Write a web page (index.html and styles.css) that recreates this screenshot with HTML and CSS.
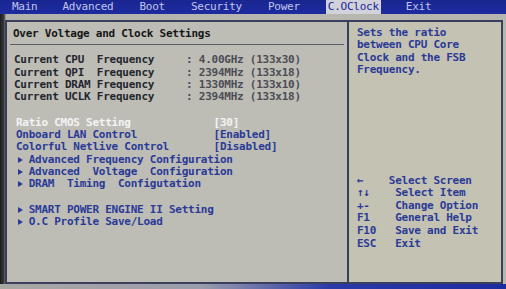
FILE: index.html
```html
<!DOCTYPE html>
<html>
<head>
<meta charset="utf-8">
<link rel="stylesheet" href="styles.css">
</head>
<body>
<div class="topbar"><span class="tab">Main</span><span class="tab t-adv">Advanced</span><span class="tab t-boot">Boot</span><span class="tab t-sec">Security</span><span class="tab t-pow">Power</span><span class="tab active">C.OClock</span><span class="tab t-exit">Exit</span></div>
<div class="frame">
  <div class="left">
    <div class="title">Over Voltage and Clock Settings</div>
    <div class="freqs">
      <div class="row"><span class="lbl">Current CPU  Frequency     </span><span class="val">: 4.00GHz (133x30)</span></div>
      <div class="row"><span class="lbl">Current QPI  Frequency     </span><span class="val">: 2394MHz (133x18)</span></div>
      <div class="row"><span class="lbl">Current DRAM Frequency     </span><span class="val">: 1330MHz (133x10)</span></div>
      <div class="row"><span class="lbl">Current UCLK Frequency     </span><span class="val">: 2394MHz (133x18)</span></div>
    </div>
    <div class="items">
      <div class="row sel">Ratio CMOS Setting             [30]</div>
      <div class="row">Onboard LAN Control            [Enabled]</div>
      <div class="row">Colorful Netlive Control       [Disabled]</div>
      <div class="row"><span class="tri"></span>  Advanced Frequency Configuration</div>
      <div class="row"><span class="tri"></span>  Advanced  Voltage  Configuration</div>
      <div class="row"><span class="tri"></span>  DRAM  Timing  Configutation</div>
    </div>
    <div class="items more">
      <div class="row"><span class="tri"></span>  SMART POWER ENGINE II Setting</div>
      <div class="row"><span class="tri"></span>  O.C Profile Save/Load</div>
    </div>
  </div>
  <div class="right">
    <div class="help">Sets the ratio<br>between CPU Core<br>Clock and the FSB<br>Frequency.</div>
    <div class="keys">
      <div class="row">←    Select Screen</div>
      <div class="row">↑↓    Select Item</div>
      <div class="row">+-    Change Option</div>
      <div class="row">F1    General Help</div>
      <div class="row">F10   Save and Exit</div>
      <div class="row">ESC   Exit</div>
    </div>
  </div>
</div>
<div class="bottombar"></div>
</body>
</html>
```
FILE: styles.css
```css
html, body {
  margin: 0;
  padding: 0;
}
body {
  width: 506px;
  height: 289px;
  overflow: hidden;
  background: linear-gradient(to right, #1c1c1e 0px, #3a3a3c 4px, #b2b2ac 6px, #b8b8b1 60%, #b6b6ae 100%);
  font-family: "DejaVu Sans Mono", "Liberation Mono", monospace;
  font-weight: bold;
  font-size: 11px;
  letter-spacing: -0.25px;
  position: relative;
}
.topbar {
  height: 14px;
  background: linear-gradient(to bottom, #1a2690, #1d2ba0);
  display: flex;
  white-space: pre;
  line-height: 14px;
  padding-left: 12px;
  box-sizing: border-box;
}
.tab {
  color: #c2c6ea;
  font-weight: normal;
}
.t-adv { margin-left: 25px; }
.t-boot { margin-left: 26px; }
.t-sec { margin-left: 26px; }
.t-pow { margin-left: 26px; }
.active {
  margin-left: 26px;
  background: #d2d2da;
  color: #1b2898;
  padding: 0 2px;
}
.t-exit { margin-left: 25px; }

.frame {
  margin: 6px 0 0 5px;
  width: 498px;
  height: 264px;
  box-sizing: border-box;
  border: 2px solid #3a3f5c;
  display: flex;
}
.left {
  width: 340px;
  background: #bdbdb6;
}
.right {
  flex: 1;
  border-left: 2px solid #3a3f5c;
  background: #c3c2b3;
  padding: 5px 0 0 8px;
  color: #2b3a96;
}
.row {
  white-space: pre;
  height: 12.3px;
  line-height: 12.3px;
}
.title {
  color: #161616;
  line-height: 12.3px;
  padding: 6px 0 3.5px 3px;
  margin: 0 3px;
  border-bottom: 1px solid #5a5e6c;
}
.freqs {
  margin-top: 9.5px;
  padding-left: 7px;
}
.lbl { color: #24262e; }
.val { color: #4c4c54; }
.items {
  margin-top: 13.4px;
  padding-left: 9px;
  color: #2b3a96;
}
.items.more {
  margin-top: 13px;
}
.sel { color: #f4f4f4; }
.tri {
  display: inline-block;
  width: 0;
  height: 0;
  border-top: 3px solid transparent;
  border-bottom: 3px solid transparent;
  border-left: 5px solid #2b3a96;
  margin-left: 2px;
  margin-right: -7px;
  vertical-align: 0px;
}
.help {
  line-height: 12.4px;
}
.keys {
  margin-top: 98px;
}
.keys .row {
  height: 12.6px;
  line-height: 12.6px;
}
.bottombar {
  position: absolute;
  left: 0;
  right: 0;
  bottom: 0;
  height: 5px;
  background: linear-gradient(to right, #a8a8a4 0%, #9a9cac 40%, #2a3aa8 65%, #1d2ba0 100%);
}
```
